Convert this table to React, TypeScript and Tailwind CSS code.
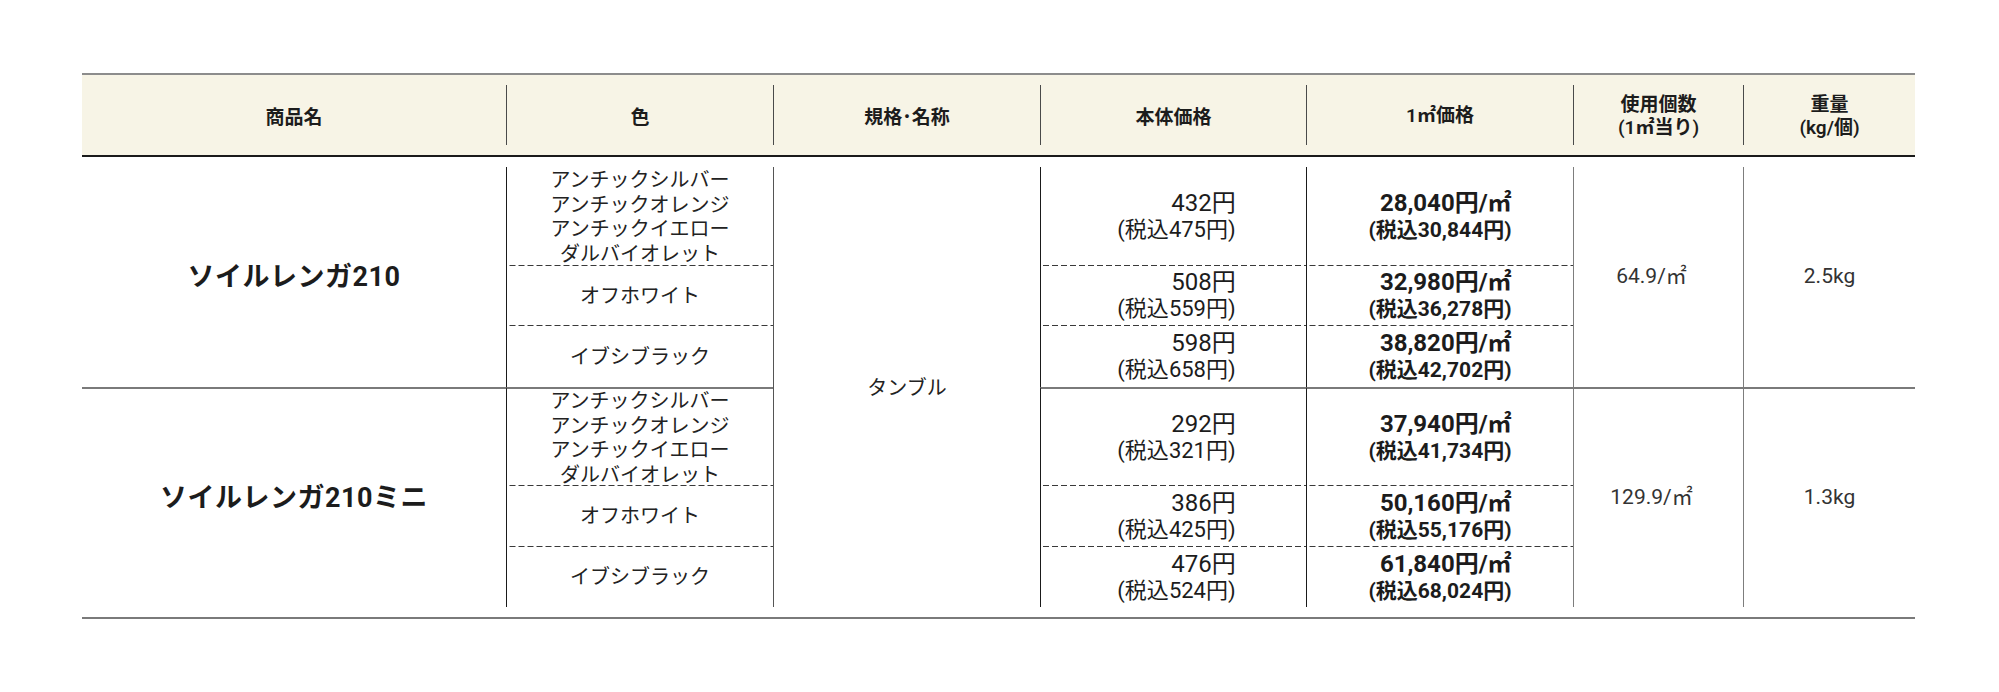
import React from "react";

const COLS = "grid-cols-[424px_267px_267px_266px_267px_170px_172px]";
const NUM = "font-['Roboto','Noto_Sans_CJK_JP',sans-serif]";
const JP = "font-['Noto_Sans_CJK_JP',sans-serif]";
const DASH =
  "bg-[linear-gradient(to_right,#3a3a3a_62%,transparent_62%)] bg-[length:9px_1px] bg-repeat-x bg-top";

type Sub = { colors: string[]; price: string; tax: string; m2: string; m2tax: string };
type Group = { name: string; usage: string; weight: string; subs: Sub[] };

const GROUPS: Group[] = [
  {
    name: "ソイルレンガ210",
    usage: "64.9/㎡",
    weight: "2.5kg",
    subs: [
      {
        colors: ["アンチックシルバー", "アンチックオレンジ", "アンチックイエロー", "ダルバイオレット"],
        price: "432",
        tax: "475",
        m2: "28,040",
        m2tax: "30,844",
      },
      { colors: ["オフホワイト"], price: "508", tax: "559", m2: "32,980", m2tax: "36,278" },
      { colors: ["イブシブラック"], price: "598", tax: "658", m2: "38,820", m2tax: "42,702" },
    ],
  },
  {
    name: "ソイルレンガ210ミニ",
    usage: "129.9/㎡",
    weight: "1.3kg",
    subs: [
      {
        colors: ["アンチックシルバー", "アンチックオレンジ", "アンチックイエロー", "ダルバイオレット"],
        price: "292",
        tax: "321",
        m2: "37,940",
        m2tax: "41,734",
      },
      { colors: ["オフホワイト"], price: "386", tax: "425", m2: "50,160", m2tax: "55,176" },
      { colors: ["イブシブラック"], price: "476", tax: "524", m2: "61,840", m2tax: "68,024" },
    ],
  },
];

const ROW_START = [
  ["row-start-2", "row-start-3", "row-start-4"],
  ["row-start-5", "row-start-6", "row-start-7"],
];
const GROUP_START = ["row-start-2", "row-start-5"];

function HeaderCell({ children, first }: { children: React.ReactNode; first?: boolean }) {
  return (
    <div
      className={
        "flex h-[60px] items-center justify-center text-center text-[19px] font-semibold leading-[23px] text-[#1c1c1c] " +
        (first ? "" : "border-l border-[#4a4a4a]")
      }
    >
      {children}
    </div>
  );
}

export default function App() {
  return (
    <div className={"min-h-[692px] w-[1999px] bg-white pt-[73px] " + JP}>
      <div className="ml-[82px] w-[1833px]">
        {/* header */}
        <div
          className={
            "grid border-t-2 border-b-2 border-t-[#8c8c8c] border-b-[#1a1a1a] bg-[#f7f4e6] py-[10px] " + COLS
          }
        >
          <HeaderCell first>商品名</HeaderCell>
          <HeaderCell>色</HeaderCell>
          <HeaderCell>規格･名称</HeaderCell>
          <HeaderCell>本体価格</HeaderCell>
          <HeaderCell>
            <span className={NUM}>1㎡価格</span>
          </HeaderCell>
          <HeaderCell>
            <span>
              使用個数
              <br />
              <span className={NUM}>(1㎡当り)</span>
            </span>
          </HeaderCell>
          <HeaderCell>
            <span>
              重量
              <br />
              <span className={NUM}>(kg/個)</span>
            </span>
          </HeaderCell>
        </div>

        {/* body */}
        <div
          className={
            "grid grid-rows-[10px_98px_60px_62px_98px_61px_61px_10px] border-b-2 border-[#7a7a7a] text-[#1c1c1c] " +
            COLS
          }
        >
          {GROUPS.map((g, gi) => {
            const top = gi === 1 ? " border-t-2 border-t-[#7a7a7a]" : "";
            return (
              <React.Fragment key={g.name}>
                <div
                  className={
                    "col-start-1 row-span-3 flex items-center justify-center text-[27px] font-bold tracking-[0.5px] " +
                    GROUP_START[gi] +
                    top +
                    " " +
                    NUM
                  }
                >
                  {g.name}
                </div>
                {g.subs.map((s, si) => {
                  const rs = ROW_START[gi][si];
                  const dashed = si > 0 ? " " + DASH : "";
                  const t = si === 0 ? top : "";
                  return (
                    <React.Fragment key={si}>
                      <div
                        className={
                          "col-start-2 flex items-center justify-center border-l border-l-[#1a1a1a] text-center text-[20px] leading-[24.5px] text-[#222] " +
                          rs +
                          t +
                          dashed
                        }
                      >
                        <span>
                          {s.colors.map((c, ci) => (
                            <React.Fragment key={c}>
                              {ci > 0 && <br />}
                              {c}
                            </React.Fragment>
                          ))}
                        </span>
                      </div>
                      <div
                        className={
                          "col-start-4 flex items-center justify-center border-l border-l-[#1a1a1a] " +
                          rs +
                          t +
                          dashed +
                          " " +
                          NUM
                        }
                      >
                        <div className="pl-[6px] text-right">
                          <span className="block text-[24px] leading-[28px]">{s.price}円</span>
                          <span className="block text-[22px] leading-[26px]">(税込{s.tax}円)</span>
                        </div>
                      </div>
                      <div
                        className={
                          "col-start-5 flex items-center justify-center border-l border-l-[#1a1a1a] font-bold " +
                          rs +
                          t +
                          dashed +
                          " " +
                          NUM
                        }
                      >
                        <div className="text-right">
                          <span className="block text-[24px] leading-[28px]">{s.m2}円/㎡</span>
                          <span className="block text-[21px] leading-[26px]">(税込{s.m2tax}円)</span>
                        </div>
                      </div>
                    </React.Fragment>
                  );
                })}
                <div
                  className={
                    "col-start-6 row-span-3 flex items-center justify-center border-l border-l-[#7d7d7d] pr-[14px] text-[21px] text-[#333] " +
                    GROUP_START[gi] +
                    top +
                    " " +
                    NUM
                  }
                >
                  {g.usage}
                </div>
                <div
                  className={
                    "col-start-7 row-span-3 flex items-center justify-center border-l border-l-[#7d7d7d] text-[21px] text-[#333] " +
                    GROUP_START[gi] +
                    top +
                    " " +
                    NUM
                  }
                >
                  {g.weight}
                </div>
              </React.Fragment>
            );
          })}
          <div className="col-start-3 row-start-2 row-span-6 flex items-center justify-center border-l border-l-[#555] text-[20px] text-[#222]">
            タンブル
          </div>
        </div>
      </div>
    </div>
  );
}
